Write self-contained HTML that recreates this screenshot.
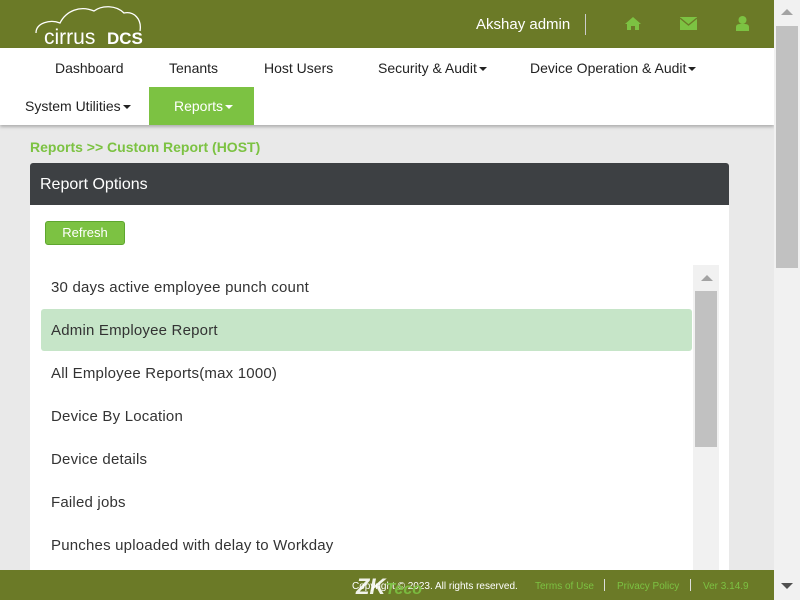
<!DOCTYPE html>
<html><head><style>
*{margin:0;padding:0;box-sizing:border-box}
body{width:800px;height:600px;overflow:hidden;background:#e9e9e9;font-family:"Liberation Sans",Arial,sans-serif;position:relative}
.hdr{position:absolute;left:0;top:0;width:774px;height:48px;background:#6b7a27}
.nav{position:absolute;left:0;top:48px;width:774px;height:77px;background:#fff;box-shadow:0 2px 3px rgba(0,0,0,.25)}
.nav span{position:absolute;font-size:14px;color:#222}
.caret{display:inline-block;border-left:4px solid transparent;border-right:4px solid transparent;border-top:4px solid #222;vertical-align:middle;margin-left:2px}
.sb{position:absolute;left:774px;top:0;width:26px;height:600px;background:#f1f1f1}
.foot{position:absolute;left:0;top:570px;width:774px;height:30px;background:#6b7a27;font-size:10px;white-space:nowrap}
.panel{position:absolute;left:30px;top:163px;width:699px;height:407px;background:#fff;border-radius:3px 3px 0 0}
.ph{height:42px;background:#3d4043;color:#fff;font-size:16px;padding:13px 10px;border-radius:3px 3px 0 0}
.item{position:absolute;left:21px;font-size:15px;color:#333;letter-spacing:.2px}
</style></head><body>
<div class="hdr">
<svg style="position:absolute;left:32px;top:3px" width="112" height="44"><path d="M4 30 C4 20 18 16 28 20 C34 8 48 2 62 8 C70 2 84 2 92 10 C102 8 110 16 108 28" fill="none" stroke="#fff" stroke-width="1.3"/>
<text x="12" y="41" fill="#fff" font-size="21" font-family="Liberation Sans">cirrus</text><text x="75" y="41" fill="#fff" font-size="17" font-weight="bold" font-family="Liberation Sans">DCS</text></svg>
<div style="position:absolute;left:476px;top:16px;color:#fff;font-size:15px">Akshay admin</div>
<div style="position:absolute;left:585px;top:14px;width:1px;height:21px;background:#ccc"></div>
<svg style="position:absolute;left:625px;top:17px" width="16" height="13"><path d="M8 0 L16 7 L14 7 L14 13 L10 13 L10 9 L6 9 L6 13 L2 13 L2 7 L0 7Z" fill="#7cc242"/></svg>
<svg style="position:absolute;left:680px;top:17px" width="17" height="13"><rect width="17" height="13" fill="#7cc242"/><path d="M0 1 L8.5 8 L17 1" fill="none" stroke="#6b7a27" stroke-width="1.3"/></svg>
<svg style="position:absolute;left:736px;top:16px" width="13" height="15"><circle cx="6.5" cy="4" r="4" fill="#7cc242"/><path d="M0 15 L0 11 Q0 8 4 8 L9 8 Q13 8 13 11 L13 15Z" fill="#7cc242"/></svg>
</div>
<div class="nav">
<span style="left:55px;top:12px">Dashboard</span>
<span style="left:169px;top:12px">Tenants</span>
<span style="left:264px;top:12px">Host Users</span>
<span style="left:378px;top:12px">Security &amp; Audit<i class="caret"></i></span>
<span style="left:530px;top:12px">Device Operation &amp; Audit<i class="caret"></i></span>
<span style="left:25px;top:50px">System Utilities<i class="caret"></i></span>
<div style="position:absolute;left:149px;top:39px;width:105px;height:38px;background:#7cc242"></div>
<span style="left:174px;top:50px;color:#fff">Reports<i class="caret" style="border-top-color:#fff"></i></span>
</div>
<div style="position:absolute;left:30px;top:139px;color:#7cc242;font-size:14px;font-weight:bold">Reports &gt;&gt; Custom Report (HOST)</div>
<div class="panel">
<div class="ph">Report Options</div>
<div style="position:absolute;left:15px;top:58px;width:80px;height:24px;background:#7cc242;border:1px solid #5ea62e;border-radius:3px;color:#fff;font-size:13px;text-align:center;line-height:22px">Refresh</div>
<div style="position:absolute;left:11px;top:146px;width:651px;height:42px;background:#c6e5c8;border-radius:3px"></div>
<div class="item" style="top:116px">30 days active employee punch count</div>
<div class="item" style="top:159px">Admin Employee Report</div>
<div class="item" style="top:202px">All Employee Reports(max 1000)</div>
<div class="item" style="top:245px">Device By Location</div>
<div class="item" style="top:288px">Device details</div>
<div class="item" style="top:331px">Failed jobs</div>
<div class="item" style="top:374px">Punches uploaded with delay to Workday</div>
<div style="position:absolute;left:663px;top:102px;width:26px;height:305px;background:#f1f1f1">
<div style="position:absolute;left:8px;top:10px;border-left:6px solid transparent;border-right:6px solid transparent;border-bottom:6px solid #a3a3a3"></div>
<div style="position:absolute;left:2px;top:26px;width:22px;height:156px;background:#c1c1c1"></div></div>
</div>
<div class="foot">
<div style="position:absolute;left:352px;top:11px;color:#fff">Copyright © 2023. All rights reserved.</div>
<div style="position:absolute;left:356px;top:4px;color:#fff;font-size:22px;font-weight:bold;font-style:italic;opacity:.9">ZK<span style="color:#7cc242;font-size:16px">Teco</span></div>
<div style="position:absolute;left:535px;top:11px;color:#7cc242">Terms of Use</div>
<div style="position:absolute;left:604px;top:9px;width:1px;height:12px;background:#ddd"></div>
<div style="position:absolute;left:617px;top:11px;color:#7cc242">Privacy Policy</div>
<div style="position:absolute;left:690px;top:9px;width:1px;height:12px;background:#ddd"></div>
<div style="position:absolute;left:703px;top:11px;color:#7cc242">Ver 3.14.9</div>
</div>
<div class="sb">
<div style="position:absolute;left:7px;top:9px;border-left:6px solid transparent;border-right:6px solid transparent;border-bottom:6px solid #a3a3a3"></div>
<div style="position:absolute;left:2px;top:26px;width:22px;height:242px;background:#c1c1c1"></div>
<div style="position:absolute;left:7px;top:583px;border-left:6px solid transparent;border-right:6px solid transparent;border-top:6px solid #505050"></div>
</div>
</body></html>
